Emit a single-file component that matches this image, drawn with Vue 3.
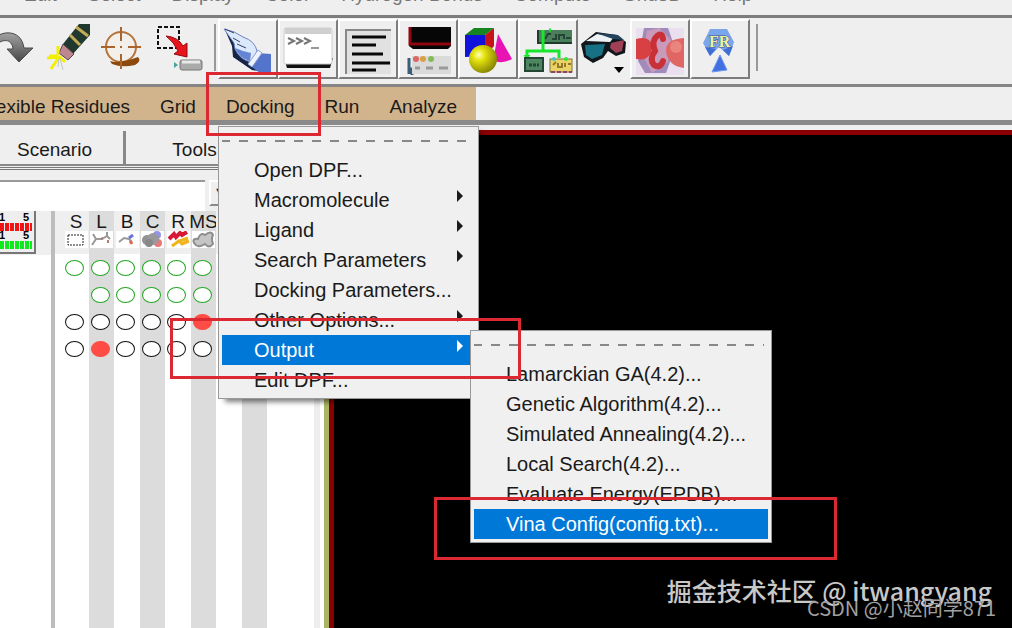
<script setup>
import { ref } from 'vue'

const topMenus = ['Edit', 'Select', 'Display', 'Color', 'Hydrogen Bonds', 'Compute', 'Grid3D', 'Help']
const adtMenus = ['Flexible Residues', 'Grid', 'Docking', 'Run', 'Analyze']

const dockingItems = [
  { label: 'Open DPF...' },
  { label: 'Macromolecule', sub: true },
  { label: 'Ligand', sub: true },
  { label: 'Search Parameters', sub: true },
  { label: 'Docking Parameters...' },
  { label: 'Other Options...', sub: true },
  { label: 'Output', sub: true, active: true },
  { label: 'Edit DPF...' }
]

const outputItems = [
  { label: 'Lamarckian GA(4.2)...' },
  { label: 'Genetic Algorithm(4.2)...' },
  { label: 'Simulated Annealing(4.2)...' },
  { label: 'Local Search(4.2)...' },
  { label: 'Evaluate Energy(EPDB)...' },
  { label: 'Vina Config(config.txt)...', active: true }
]

const filter = ref('')

// one entry per column: g = green ring, k = black ring, x = checked, - = nothing
const columns = ref([
  { name: 'S', cells: ['g', '-', 'k', 'k'] },
  { name: 'L', cells: ['g', 'g', 'k', 'x'] },
  { name: 'B', cells: ['g', 'g', 'k', 'k'] },
  { name: 'C', cells: ['g', 'g', 'k', 'k'] },
  { name: 'R', cells: ['g', 'g', 'k', 'k'] },
  { name: 'MS', cells: ['g', 'g', 'x', 'k'] },
  { name: '', cells: [] },
  { name: '', cells: [] },
  { name: '', cells: [] }
])
</script>

<template>
  <div class="app">
    <nav class="top-menu">
      <button v-for="m in topMenus" :key="m" type="button">{{ m }}</button>
    </nav>

    <div class="toolbar">
      <div class="plain-tools">
        <button type="button" class="tool redo" aria-label="Redo">
          <svg width="34" height="48" viewBox="0 0 34 48">
            <defs>
              <linearGradient id="gr" x1="0" y1="0" x2="0" y2="1">
                <stop offset="0" stop-color="#a2a2a2" /><stop offset="1" stop-color="#484848" />
              </linearGradient>
            </defs>
            <path d="M-8 18 C-2 8 21 4 24 25 H33 L19 39 L7 26 H13 C12 15 2 16 -4 22Z" fill="url(#gr)" stroke="#4a4a4a" />
          </svg>
        </button>
        <button type="button" class="tool" aria-label="Clean up">
          <svg width="44" height="48" viewBox="0 0 44 48">
            <path d="M33 1 H44 V12 L26 32 L17 21Z" fill="#20382e" />
            <path d="M30 4 L42 13 M24 12 L34 22" stroke="#c2ac55" stroke-width="3" />
            <path d="M17 21 L28 31 L22 37 L13 30Z" fill="#bd8790" stroke="#5c4046" />
            <path d="M12 23 V32 M1 35 L14 34 L19 39 M5 46 L13 34 M12 33 L3 33" stroke="#f3ef00" stroke-width="3" fill="none" />
            <path d="M14 35 L17 47 M13 36 L12 44" stroke="#c3c3c3" />
          </svg>
        </button>
        <button type="button" class="tool" aria-label="Center">
          <svg width="44" height="48" viewBox="0 0 44 48">
            <circle cx="21" cy="24" r="15" fill="#f3f0ec" stroke="#b5733a" stroke-width="2" />
            <path d="M10 38 Q20 41 38 34 Q42 38 35 42 Q22 45 12 41Z" fill="#8b4a0c" />
            <path d="M21 4 V18 M21 31 V46 M1 24 H15 M28 24 H41 M21 23 V25" stroke="#a9652c" stroke-width="2" />
          </svg>
        </button>
        <button type="button" class="tool" aria-label="Drop selection">
          <svg width="50" height="52" viewBox="0 0 50 52">
            <rect x="4" y="4" width="21" height="21" fill="none" stroke="#111" stroke-width="2" stroke-dasharray="4 2" />
            <path d="M12 13 Q24 14 29 23 L33 20 V34 L20 31 L24 28 Q20 19 12 13Z" fill="#e8141c" stroke="#930a10" />
            <rect x="26" y="37" width="22" height="10" rx="2" fill="#aaa" stroke="#777" />
            <path d="M28 39 H46" stroke="#e8e8e8" stroke-width="3" />
            <path d="M20 39 L24 42 L20 45Z" fill="#4aa39b" />
          </svg>
        </button>
      </div>
      <span class="divider"></span>

      <div class="raised-tools">
        <button type="button" class="tool raised" aria-label="Pick">
          <svg width="54" height="54" viewBox="0 0 54 54">
            <path d="M5 8 L18 20 L36 31 L38 49 L32 48 L13 35 L12 24Z" fill="#152347" />
            <path d="M4 7 Q15 9 23 15 Q35 19 37 29 L31 40 Q20 38 15 27 L14 21Z" fill="#dce8fb" stroke="#6e84c0" />
            <path d="M5 7 L14 11 M13 16 L20 20 M17 22 L26 26" fill="none" stroke="#333f66" stroke-width="1" />
            <path d="M15 26 L23 29 L31 31 L30 39 Q20 37 15 26Z" fill="#6484d4" />
            <path d="M37 31 L51 32 V51 H40 L29 43Z" fill="#5474cc" />
            <path d="M38 28 L28 42 L32 45 L42 31Z" fill="#eef3ff" stroke="#8ca1d5" />
          </svg>
        </button>
        <button type="button" class="tool raised" aria-label="Python shell">
          <svg width="54" height="54" viewBox="0 0 54 54">
            <path d="M4 36 H53 L50 46 H7Z" fill="#111" />
            <rect x="4" y="6" width="48" height="36" rx="2" fill="#fff" stroke="#ccc" />
            <path d="M5 9 H51" stroke="#cfcfcf" stroke-width="6" />
            <path d="M8 16 L14 19 L8 22 M16 16 L22 19 L16 22 M24 16 L30 19 L24 22" fill="none" stroke="#777" stroke-width="2" />
            <path d="M31 26 H39" stroke="#999" stroke-width="2" />
          </svg>
        </button>
        <button type="button" class="tool raised" aria-label="Log">
          <svg width="54" height="54" viewBox="0 0 54 54">
            <rect x="6" y="8" width="45" height="44" fill="#e1e1e1" />
            <path d="M6 52 V8 H51" fill="none" stroke="#888" stroke-width="2" />
            <path d="M12 15 H46 M12 23 H36 M12 32 H43 M12 41 H50 M12 48 H36" stroke="#080808" stroke-width="3" />
          </svg>
        </button>
        <button type="button" class="tool raised" aria-label="Widgets">
          <svg width="54" height="54" viewBox="0 0 54 54">
            <path d="M9 5 H51 V24 L48 27 H13 L9 24Z" fill="#060606" />
            <path d="M10 5 V22 H51" fill="none" stroke="#8d0710" stroke-width="3" />
            <path d="M9 36 V52 M9 47 H12 V53" stroke="#3a5d78" stroke-width="3" fill="none" />
            <rect x="12" y="34" width="39" height="18" fill="#dadada" />
            <circle cx="16" cy="37" r="3" fill="#d66" /><circle cx="23" cy="37" r="3" fill="#dba047" /><circle cx="31" cy="37" r="3" fill="#86b95b" />
            <path d="M15 46 H20 M26 46 H33 M39 46 H48" stroke="#999" stroke-width="3" />
          </svg>
        </button>
        <button type="button" class="tool raised" aria-label="Geometry">
          <svg width="54" height="54" viewBox="0 0 54 54">
            <path d="M5 13 L25 13 V34 L5 35Z" fill="#1111dc" />
            <path d="M5 13 L14 6 H34 L25 13Z" fill="#158421" />
            <path d="M25 13 L34 6 V24 L25 34Z" fill="#c6131a" />
            <path d="M38 12 L52 37 Q44 42 33 39Z" fill="#e713b2" />
            <defs>
              <radialGradient id="ball" cx=".35" cy=".35" r=".7">
                <stop offset="0" stop-color="#ffffb5" /><stop offset=".3" stop-color="#e5e310" /><stop offset="1" stop-color="#858300" />
              </radialGradient>
            </defs>
            <circle cx="23" cy="37" r="14" fill="url(#ball)" />
          </svg>
        </button>
        <button type="button" class="tool raised" aria-label="Vision networks">
          <svg width="54" height="54" viewBox="0 0 54 54">
            <rect x="18" y="8" width="34" height="14" fill="#4b7e5b" />
            <path d="M18 22 V8 M18 21 H52" stroke="#213c2b" stroke-width="2" />
            <path d="M25 17 L28 12 H31 M32 17 H36 V12 M39 18 V13 H44 V17 M46 16 H51" stroke="#244533" stroke-width="2" fill="none" />
            <path d="M23 8 V29 M7 36 V29 H39 V36 M29 8 H31" stroke="#17e62d" stroke-width="3" fill="none" />
            <path d="M4 33 L7 37 L10 33" fill="#17e62d" stroke="#17e62d" />
            <rect x="5" y="36" width="18" height="13" fill="#4d8660" stroke="#244533" stroke-width="2" />
            <path d="M9 43 H19" stroke="#244533" stroke-width="3" stroke-dasharray="3 1" />
            <rect x="30" y="37" width="22" height="13" fill="#e9d266" stroke="#7c763b" />
            <path d="M33 43 L36 40 M38 41 V45 H42 V41 M45 41 V45 M48 42 H51" stroke="#967826" stroke-width="2" fill="none" />
            <path d="M31 50 H52" stroke="#953d6e" stroke-width="2" stroke-dasharray="4 2" />
            <circle cx="34" cy="37" r="2" fill="#48c5c7" /><circle cx="46" cy="37" r="2" fill="#31e837" />
          </svg>
        </button>
        <button type="button" class="tool flat" aria-label="Stereo">
          <svg width="50" height="54" viewBox="0 0 50 54">
            <path d="M3 22 L18 10 L39 13 L48 20 L47 31 L38 34 L30 29 L25 36 L15 41 L6 35Z" fill="#10161b" />
            <path d="M8 19 L19 12 L36 15 L32 20Z" fill="#edf2f5" />
            <path d="M18 11 L40 13 L46 18 L35 17Z" fill="#24445d" />
            <path d="M7 23 L27 22 L24 33 L14 37 L8 33Z" fill="#167185" />
            <path d="M33 21 L46 18 L44 29 L38 31 L32 26Z" fill="#9f4056" />
            <path d="M36 45 H46 L41 51Z" fill="#000" />
          </svg>
        </button>
        <button type="button" class="tool raised" aria-label="Ambient occlusion">
          <svg width="54" height="54" viewBox="0 0 54 54">
            <rect x="4" y="6" width="48" height="47" fill="#eadfee" />
            <path d="M12 6 H36 L43 26 L34 51 H13 L6 39Z" fill="#a18bbb" />
            <path d="M15 9 L27 6 L39 18 L36 40 L20 51 L11 34Z" fill="#c99ab9" />
            <path d="M4 17 Q18 13 20 24 Q19 40 4 37Z" fill="#d84144" />
            <path d="M52 16 Q34 17 34 29 Q36 44 52 46Z" fill="#e06663" />
            <ellipse cx="44" cy="25" rx="6" ry="6" fill="#f09a90" opacity=".6" />
            <path d="M31 17 Q30 10 25 14 Q19 19 23 29 Q17 37 22 43 Q28 47 31 39" fill="none" stroke="#ca3038" stroke-width="6" stroke-linecap="round" />
          </svg>
        </button>
        <button type="button" class="tool raised" aria-label="Flexible residues">
          <svg width="54" height="54" viewBox="0 0 54 54">
            <path d="M18 7 H35 L42 20 L37 34 L27 25 L18 34 L11 21Z" fill="#7aa5ea" />
            <path d="M13 25 L24 27 L18 34Z M31 28 L41 24 L37 34Z" fill="#3f6fd2" />
            <path d="M28 33 L35 48 L20 50Z" fill="#4270e1" stroke="#7098ec" />
            <text x="17" y="25" class="fr">FR</text>
          </svg>
        </button>
      </div>
      <span class="divider"></span>
    </div>

    <div class="band">
      <nav class="adt-menu">
        <button v-for="m in adtMenus" :key="m" type="button">{{ m }}</button>
      </nav>
    </div>

    <main class="work">
      <aside class="side">
        <div class="tabs">
          <button type="button">Scenario</button>
          <button type="button">Tools</button>
        </div>
        <div class="filter">
          <input v-model="filter" type="text" aria-label="Filter" />
          <button type="button" aria-label="History">▼</button>
        </div>

        <div class="tree">
          <div class="names">
            <div class="names-head">
              <svg class="leds" width="36" height="43" viewBox="0 0 36 43">
                <rect width="36" height="43" fill="#eee" />
                <text x="-1" y="10" class="led-label">1</text>
                <text x="23" y="10" class="led-label">5</text>
                <path d="M0 16 H32" stroke="#f01414" stroke-width="8" stroke-dasharray="4 1" />
                <text x="-1" y="28" class="led-label">1</text>
                <text x="23" y="28" class="led-label">5</text>
                <path d="M0 34 H32" stroke="#0cec1c" stroke-width="8" stroke-dasharray="4 1" />
                <path d="M35 0 V42 H0" fill="none" stroke="#777" stroke-width="2" />
              </svg>
            </div>
          </div>
          <div class="grid">
            <div v-for="(col, i) in columns" :key="i" class="col">
              <div class="col-head">
                <span>{{ col.name }}</span>
                <svg v-if="col.name" width="23" height="17" viewBox="0 0 23 17">
                  <rect width="23" height="17" fill="#fff" />
                  <rect v-if="i === 0" x="3" y="4" width="15" height="10" fill="none" stroke="#222" stroke-dasharray="2 1" />
                  <g v-else-if="i === 1" fill="none" stroke-width="2">
                    <path d="M2 14 L6 8 L12 8 L17 5 L20 8 M6 8 L3 3 M17 5 V1" stroke="#999" />
                    <path d="M11 8 L13 7 M18 9 V12" stroke="#b77" />
                  </g>
                  <g v-else-if="i === 2" fill="none" stroke-width="2">
                    <path d="M3 11 L8 7 L13 8 L16 11" stroke="#999" />
                    <path d="M13 7 L17 4" stroke="#6875dc" stroke-width="3" />
                    <path d="M14 10 L16 13" stroke="#dd694e" stroke-width="3" />
                  </g>
                  <g v-else-if="i === 3">
                    <circle cx="16" cy="4" r="4" fill="#9194e8" /><circle cx="17" cy="12" r="4" fill="#ed7777" />
                    <circle cx="6" cy="9" r="5" fill="#929292" /><circle cx="12" cy="8" r="6" fill="#999" /><circle cx="8" cy="12" r="4" fill="#888" />
                  </g>
                  <g v-else-if="i === 4" fill="none">
                    <path d="M2 8 L7 3 L9 6 L13 2 L15 4 L20 1" stroke="#d51937" stroke-width="4" />
                    <path d="M5 15 L12 10 L15 13 L22 10 M10 11 L21 7" stroke="#efb41b" stroke-width="3" />
                  </g>
                  <path v-else d="M2 12 Q0 7 6 8 Q8 1 13 4 Q19 -1 21 4 Q19 8 21 13 Q17 18 13 13 Q6 18 2 12Z" fill="#c5c5c5" stroke="#8d8d8d" stroke-width="2" />
                </svg>
              </div>
              <div v-for="(c, r) in col.cells" :key="r" class="cell">
                <input v-if="c !== '-'" type="checkbox" :class="{ green: c === 'g' }" :checked="c === 'x'" :aria-label="col.name + ' row ' + (r + 1)" />
              </div>
            </div>
          </div>
          <div class="trough"></div>
        </div>
      </aside>

      <section class="viewer"></section>
    </main>

    <div class="menu docking">
      <div class="tear"></div>
      <button v-for="item in dockingItems" :key="item.label" type="button" class="item" :class="{ active: item.active }">
        <span>{{ item.label }}</span>
        <svg v-if="item.sub" width="8" height="14" viewBox="0 0 8 14"><path d="M1 1 L7 7 L1 13Z" fill="currentColor" /></svg>
      </button>
    </div>

    <div class="menu output">
      <div class="tear"></div>
      <button v-for="item in outputItems" :key="item.label" type="button" class="item" :class="{ active: item.active }">
        <span>{{ item.label }}</span>
      </button>
    </div>

    <div class="mark mark-docking"></div>
    <div class="mark mark-output"></div>
    <div class="mark mark-vina"></div>

    <p class="credit credit-main">掘金技术社区 @ itwangyang</p>
    <p class="credit credit-sub">CSDN @小赵同学871</p>
  </div>
</template>

<style>
body {
  margin: 0;
  background: #000;
}
</style>

<style scoped>
.app {
  position: relative;
  display: flex;
  flex-direction: column;
  min-height: 100vh;
  overflow: hidden;
  background: #efefef;
  color: #1a1a1a;
  font-family: "Liberation Sans", Arial, sans-serif;
  font-size: 19px;
  line-height: 20px;
}

button {
  margin: 0;
  padding: 0;
  border: 0;
  background: none;
  color: inherit;
  font: inherit;
  white-space: nowrap;
}

.top-menu {
  display: flex;
  align-items: flex-start;
  gap: 31px;
  height: 30px;
  margin-top: -15px;
  padding-left: 24px;
  color: #777;
  border-bottom: 3px solid #7d7d7d;
}

.toolbar {
  display: flex;
  height: 66px;
  border-bottom: 3px solid #858585;
}

.plain-tools {
  display: flex;
  align-items: flex-start;
  gap: 10px;
  width: 214px;
  padding-top: 5px;
}

.raised-tools {
  display: flex;
  padding: 1px 6px 0 2px;
}

.divider {
  width: 2px;
  height: 47px;
  margin-top: 6px;
  background: #999;
}

.tool svg {
  display: block;
}

.redo {
  margin-right: 2px;
}

.raised {
  width: 60px;
  height: 60px;
  border-style: solid;
  border-width: 2px;
  border-color: #fff #7d7d7d #7d7d7d #fff;
}

.flat {
  width: 52px;
  height: 60px;
}

.fr {
  font-family: "Liberation Serif", serif;
  font-size: 16px;
  font-weight: bold;
  fill: #f0f0a0;
  stroke: #39558f;
  stroke-width: 1px;
  paint-order: stroke;
}

.band {
  display: flex;
  height: 33px;
  border-bottom: 5px solid #8a8a8a;
}

.adt-menu {
  display: flex;
  align-items: center;
  margin-left: -35px;
  padding: 6px 4px 0 0;
  box-sizing: border-box;
  background: #d2b48c;
}

.adt-menu button {
  padding: 0 15px;
}

.work {
  display: flex;
  flex: 1;
}

.side {
  display: flex;
  flex-direction: column;
  flex: 0 0 329px;
}

.tabs {
  display: flex;
  height: 42px;
  border-bottom: 3px double #777;
}

.tabs button {
  width: 140px;
  margin: 6px 0 1px;
  padding-top: 4px;
  border-right: 3px solid #888;
  border-bottom: 2px solid #888;
}

.tabs button:first-child {
  width: 126px;
  padding-right: 14px;
}

.filter {
  display: flex;
  align-items: flex-start;
  gap: 4px;
  margin-top: 10px;
}

.filter input {
  width: 205px;
  height: 31px;
  padding: 0 4px;
  box-sizing: border-box;
  border: 0;
  border-top: 2px solid #999;
  background: #fff;
  font: inherit;
}

.filter button {
  width: 24px;
  height: 26px;
  border: 2px solid #8a8a8a;
  border-top-color: #fff;
  border-left-color: #fff;
  font-size: 16px;
}

.tree {
  display: flex;
  flex: 1;
  background: #fff;
}

.names {
  width: 51px;
  border-right: 4px solid #bdbdbd;
}

.names-head {
  height: 44px;
  background: #efefef;
}

.leds {
  display: block;
}

.led-label {
  font-size: 11px;
  font-weight: bold;
}

.grid {
  display: grid;
  grid-template-columns: 34px 25px 26px 25px 26px 25px 26px 25px 1fr;
  flex: 1;
}

.col:nth-child(even) {
  background: #dcdcdc;
}

.col:first-child {
  padding-left: 8px;
}

.col:first-child .col-head {
  margin-left: -8px;
  padding-left: 8px;
}

.col-head {
  display: flex;
  flex-direction: column;
  align-items: center;
  height: 43px;
  background: #efefef;
}

.col:nth-child(even) .col-head {
  background: #dcdcdc;
}

.col-head span {
  height: 20px;
  padding-top: 1px;
  box-sizing: border-box;
}

.cell {
  display: flex;
  align-items: center;
  justify-content: center;
  height: 27px;
  padding-right: 3px;
}

.cell input {
  appearance: none;
  flex: none;
  width: 19px;
  height: 16px;
  margin: 0;
  border: 1px solid #111;
  border-radius: 50%;
  background: #fff;
}

.cell input.green {
  border-color: #22a822;
}

.cell input:checked {
  border-color: #ff4d45;
  background: #ff4d45;
}

.trough {
  width: 6px;
  margin-right: 9px;
  background: #eee;
}

.viewer {
  flex: 1;
  margin-top: 5px;
  border-top: 5px solid #8b0000;
  border-left: 5px solid #8b0000;
  outline: 5px solid #a9b665;
  background: #000;
  clip-path: inset(0 0 0 -5px);
}

.menu {
  position: absolute;
  display: flex;
  flex-direction: column;
  box-sizing: border-box;
  padding: 3px;
  border: 1px solid #999;
  background: #f0f0f0;
  font-size: 20px;
}

.docking {
  top: 126px;
  left: 218px;
  width: 261px;
  box-shadow: 5px 5px 5px -2px rgba(0, 0, 0, 0.5);
}

.output {
  top: 330px;
  left: 470px;
  width: 302px;
}

.tear {
  height: 10px;
  margin: 0 4px 13px 0;
  border-bottom: 1px solid;
  border-image: repeating-linear-gradient(90deg, #888 0 9px, transparent 9px 18px) 1;
  border-width: 0 0 2px;
}

.item {
  display: flex;
  justify-content: space-between;
  align-items: center;
  height: 30px;
  padding: 0 11px 0 32px;
  text-align: left;
}

.item svg {
  margin-bottom: 8px;
}

.item.active {
  background: #0078d7;
  color: #fff;
}

.mark {
  position: absolute;
  box-sizing: border-box;
  border: 3px solid #dc2830;
}

.mark-docking {
  top: 72px;
  left: 206px;
  width: 115px;
  height: 64px;
}

.mark-output {
  top: 318px;
  left: 170px;
  width: 351px;
  height: 61px;
}

.mark-vina {
  top: 497px;
  left: 434px;
  width: 403px;
  height: 63px;
}

.credit {
  position: absolute;
  margin: 0;
  font-family: "Noto Sans CJK SC", sans-serif;
  white-space: nowrap;
}

.credit-main {
  right: 20px;
  bottom: 24px;
  color: #c8c8c8;
  font-size: 25px;
  font-weight: 500;
  line-height: 28px;
}

.credit-sub {
  right: 16px;
  bottom: 8px;
  color: #a0a0a0;
  font-size: 20px;
  line-height: 24px;
}
</style>
